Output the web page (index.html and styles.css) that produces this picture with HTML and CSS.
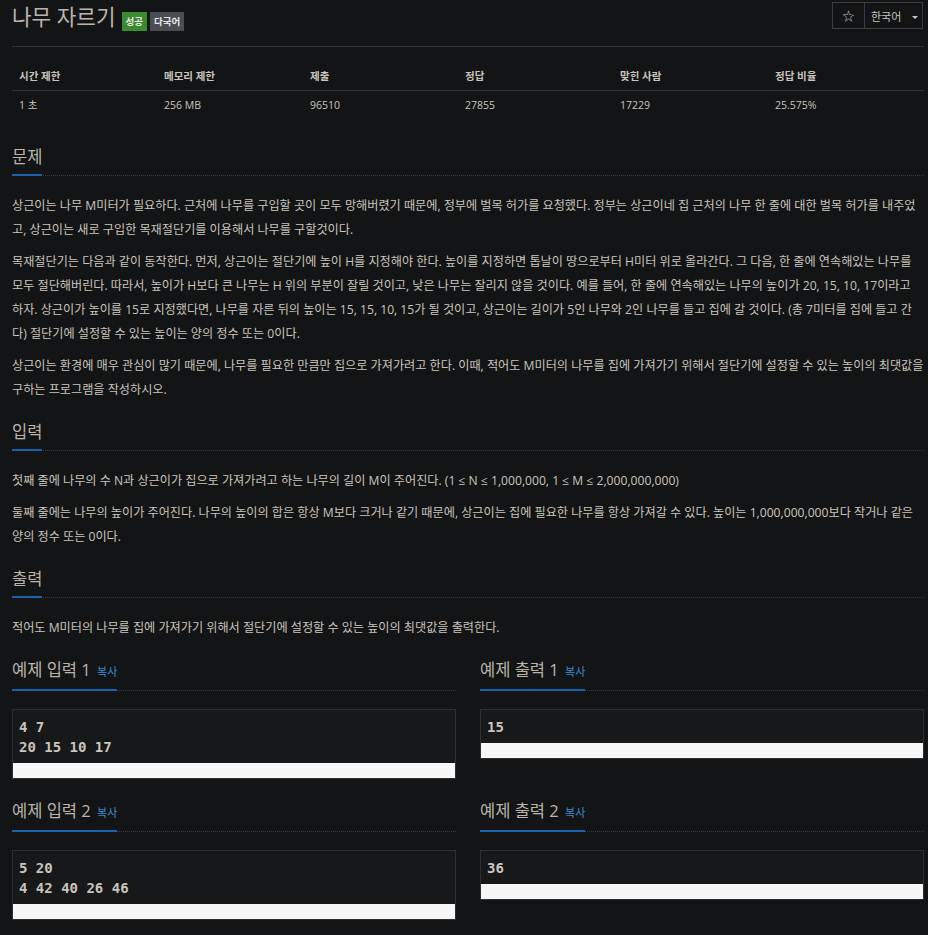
FILE: index.html
```html
<!DOCTYPE html>
<html lang="ko">
<head>
    <meta charset="UTF-8">
    <meta name="viewport" content="width=device-width, initial-scale=1.0">
    <title>나무 자르기</title>
    <link rel="stylesheet" href="styles.css">
</head>
<body>
    <div class="wrapper">
        <div class="page-header">
            <h1 class="title">
                <span class="title-text">나무 자르기</span>
                <span class="label label-success">성공</span>
                <span class="label label-lang">다국어</span>
            </h1>
            <div class="btn-group">
                <button class="btn btn-star">☆</button>
                <button class="btn btn-lang">한국어 <span class="caret"></span></button>
            </div>
        </div>

        <table class="info-table">
            <thead>
                <tr>
                    <th>시간 제한</th>
                    <th>메모리 제한</th>
                    <th>제출</th>
                    <th>정답</th>
                    <th>맞힌 사람</th>
                    <th>정답 비율</th>
                </tr>
            </thead>
            <tbody>
                <tr>
                    <td>1 초</td>
                    <td>256 MB</td>
                    <td>96510</td>
                    <td>27855</td>
                    <td>17229</td>
                    <td>25.575%</td>
                </tr>
            </tbody>
        </table>

        <div class="headline"><h2>문제</h2></div>
        <div class="problem-text">
            <p>상근이는 나무 M미터가 필요하다. 근처에 나무를 구입할 곳이 모두 망해버렸기 때문에, 정부에 벌목 허가를 요청했다. 정부는 상근이네 집 근처의 나무 한 줄에 대한 벌목 허가를 내주었고, 상근이는 새로 구입한 목재절단기를 이용해서 나무를 구할것이다.</p>
            <p>목재절단기는 다음과 같이 동작한다. 먼저, 상근이는 절단기에 높이 H를 지정해야 한다. 높이를 지정하면 톱날이 땅으로부터 H미터 위로 올라간다. 그 다음, 한 줄에 연속해있는 나무를 모두 절단해버린다. 따라서, 높이가 H보다 큰 나무는 H 위의 부분이 잘릴 것이고, 낮은 나무는 잘리지 않을 것이다. 예를 들어, 한 줄에 연속해있는 나무의 높이가 20, 15, 10, 17이라고 하자. 상근이가 높이를 15로 지정했다면, 나무를 자른 뒤의 높이는 15, 15, 10, 15가 될 것이고, 상근이는 길이가 5인 나무와 2인 나무를 들고 집에 갈 것이다. (총 7미터를 집에 들고 간다) 절단기에 설정할 수 있는 높이는 양의 정수 또는 0이다.</p>
            <p>상근이는 환경에 매우 관심이 많기 때문에, 나무를 필요한 만큼만 집으로 가져가려고 한다. 이때, 적어도 M미터의 나무를 집에 가져가기 위해서 절단기에 설정할 수 있는 높이의 최댓값을 구하는 프로그램을 작성하시오.</p>
        </div>

        <div class="headline"><h2>입력</h2></div>
        <div class="problem-text">
            <p>첫째 줄에 나무의 수 N과 상근이가 집으로 가져가려고 하는 나무의 길이 M이 주어진다. (1 ≤ N ≤ 1,000,000, 1 ≤ M ≤ 2,000,000,000)</p>
            <p>둘째 줄에는 나무의 높이가 주어진다. 나무의 높이의 합은 항상 M보다 크거나 같기 때문에, 상근이는 집에 필요한 나무를 항상 가져갈 수 있다. 높이는 1,000,000,000보다 작거나 같은 양의 정수 또는 0이다.</p>
        </div>

        <div class="headline"><h2>출력</h2></div>
        <div class="problem-text">
            <p>적어도 M미터의 나무를 집에 가져가기 위해서 절단기에 설정할 수 있는 높이의 최댓값을 출력한다.</p>
        </div>

        <div class="samples">
            <div class="sample">
                <div class="headline"><h2>예제 입력 1 <a class="copy" href="#">복사</a></h2></div>
                <div class="sampledata">
                    <pre>4 7
20 15 10 17</pre>
                    <div class="scroll-bar"></div>
                </div>
            </div>
            <div class="sample">
                <div class="headline"><h2>예제 출력 1 <a class="copy" href="#">복사</a></h2></div>
                <div class="sampledata">
                    <pre>15</pre>
                    <div class="scroll-bar"></div>
                </div>
            </div>
            <div class="sample">
                <div class="headline"><h2>예제 입력 2 <a class="copy" href="#">복사</a></h2></div>
                <div class="sampledata">
                    <pre>5 20
4 42 40 26 46</pre>
                    <div class="scroll-bar"></div>
                </div>
            </div>
            <div class="sample">
                <div class="headline"><h2>예제 출력 2 <a class="copy" href="#">복사</a></h2></div>
                <div class="sampledata">
                    <pre>36</pre>
                    <div class="scroll-bar"></div>
                </div>
            </div>
        </div>
    </div>
</body>
</html>
```

FILE: styles.css
```css
body {
    margin: 0;
    background-color: #131416;
    color: #c9c4bc;
    font-family: "Open Sans", "Noto Sans CJK KR", sans-serif;
    font-size: 12.15px;
}
.wrapper {
    margin: 0 4px 0 12px;
}

/* cabecera */
.page-header {
    display: flex;
    justify-content: space-between;
    align-items: flex-start;
    height: 46px;
    border-bottom: 1px solid #333436;
}
.title {
    display: flex;
    align-items: flex-start;
    margin: 0;
    padding-top: 2px;
    font-size: 21.3px;
    font-weight: 400;
    color: #bab4ab;
}
.title-text {
    line-height: 30px;
}
.label {
    margin-top: 10px;
    height: 19px;
    padding: 0 4px;
    line-height: 19px;
    font-size: 9.5px;
    font-weight: 700;
    color: #e6e6e6;
}
.label-success {
    margin-left: 6px;
    background-color: #3b8a2f;
}
.label-lang {
    margin-left: 3px;
    background-color: #4a4e53;
}
.btn-group {
    display: flex;
    margin-top: 2px;
    margin-right: 1px;
}
.btn {
    height: 27px;
    box-sizing: border-box;
    border: 1px solid #3a3b3d;
    background-color: #131416;
    color: #c9c4bc;
    font-family: inherit;
    font-size: 11px;
    padding: 0;
}
.btn-star {
    width: 33px;
    font-size: 12px;
}
.btn-lang {
    width: 59px;
    margin-left: -1px;
    text-align: left;
    padding-left: 6px;
}
.caret {
    display: inline-block;
    margin-left: 8px;
    vertical-align: middle;
    border-top: 3px solid #c9c4bc;
    border-left: 3px solid transparent;
    border-right: 3px solid transparent;
}

/* tabla */
.info-table {
    width: 100%;
    margin: 15px 0 26px;
    border-collapse: collapse;
    table-layout: fixed;
}
.info-table th,
.info-table td {
    padding: 6px 7px;
    line-height: 16px;
    text-align: left;
    font-size: 10.5px;
}
.info-table th {
    font-weight: 700;
    border-bottom: 1px solid #333436;
}
.info-table th:nth-child(1) { width: 131px; }
.info-table th:nth-child(2) { width: 132px; }
.info-table th:nth-child(3) { width: 141px; }
.info-table th:nth-child(4) { width: 141px; }
.info-table th:nth-child(5) { width: 141px; }

/* secciones */
.headline {
    margin: 18px 0;
    border-bottom: 1px dotted #38393b;
}
.headline h2 {
    display: inline-block;
    margin: 0 0 -1px;
    padding-bottom: 5px;
    border-bottom: 2px solid #1b62ad;
    font-size: 16.5px;
    font-weight: 400;
    line-height: 24px;
    color: #bab4ab;
}
.problem-text p {
    margin: 0 0 8px;
    line-height: 24px;
}
.copy {
    margin-left: 2px;
    font-size: 11px;
    color: #3d8ad2;
    text-decoration: none;
}

/* ejemplos */
.samples {
    display: grid;
    grid-template-columns: 1fr 1fr;
    column-gap: 24px;
    row-gap: 20px;
    margin-top: 18px;
}
.sample .headline {
    margin: 0 0 18px;
}
.sampledata {
    border: 1px solid #2e2f31;
    background-color: #171819;
}
.sampledata pre {
    margin: 0;
    padding: 7px 6px 6px;
    font-family: "DejaVu Sans Mono", monospace;
    font-size: 14px;
    font-weight: 700;
    line-height: 20px;
    color: #c9c4bc;
}
.scroll-bar {
    height: 15px;
    background-color: #f7f7f7;
}
```
